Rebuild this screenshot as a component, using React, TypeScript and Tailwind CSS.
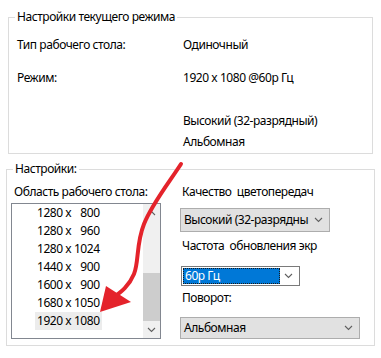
import React from "react";

const modes = [
  "1280 x \u2007800",
  "1280 x \u2007960",
  "1280 x 1024",
  "1440 x \u2007900",
  "1600 x \u2007900",
  "1680 x 1050",
  "1920 x 1080",
];

function Chevron({ up = false, className = "" }: { up?: boolean; className?: string }) {
  return (
    <svg width="9" height="6" viewBox="0 0 9 6" className={className}>
      <polyline
        points={up ? "1,5 4.5,1.5 8,5" : "1,1 4.5,4.5 8,1"}
        fill="none"
        stroke="currentColor"
        strokeWidth="1.1"
      />
    </svg>
  );
}

function Select({ text, width, height }: { text: string; width: string; height: string }) {
  return (
    <div className={`${width} ${height} flex items-center border border-[#adadad] bg-[#e1e1e1] pl-[3px] pr-[6px]`}>
      <span className="flex-1 whitespace-nowrap">{text}</span>
      <Chevron className="text-[#606060] shrink-0" />
    </div>
  );
}

export default function App() {
  return (
    <div className="relative w-[381px] h-[358px] bg-white font-['Noto_Sans',sans-serif] text-[12px] leading-[16px] tracking-[-0.45px] text-black overflow-hidden">
      {/* current mode */}
      <fieldset className="ml-[8px] mt-[9px] w-[365px] h-[145px] border border-[#dcdcdc] pl-[6px]">
        <legend className="px-[2px]">Настройки текущего режима</legend>
        <div className="grid grid-cols-[166px_1fr] pl-[2px]">
          <div className="mt-[12px]">Тип рабочего стола:</div>
          <div className="mt-[12px]">Одиночный</div>
          <div className="mt-[17px]">Режим:</div>
          <div className="mt-[17px]">1920 x 1080 @60р Гц</div>
          <div />
          <div className="mt-[27px]">Высокий (32-разрядный)</div>
          <div />
          <div className="mt-[5px]">Альбомная</div>
        </div>
      </fieldset>

      {/* settings */}
      <fieldset className="ml-[6px] mt-[7px] w-[369px] h-[185px] border border-[#dcdcdc] pl-[4px]">
        <legend className="ml-[2px] px-[2px]">Настройки:</legend>
        <div className="flex gap-[19px]">
          <div className="w-[150px]">
            <div className="mt-[7px] pl-[3px] whitespace-nowrap">Область рабочего стола:</div>
            <div className="mt-[3px] h-[136px] border border-[#828790] flex">
              <div className="flex-1">
                {modes.map((m, i) => (
                  <div key={i} className="h-[18px] flex items-center">
                    <span
                      className={`ml-[23px] px-[2px] h-[18px] flex items-center whitespace-pre ${
                        i === modes.length - 1 ? "bg-[#ececec]" : ""
                      }`}
                    >
                      {m}
                    </span>
                  </div>
                ))}
              </div>
              <div className="w-[17px] bg-[#f0f0f0] flex flex-col">
                <div className="h-[17px] flex items-center justify-center text-[#606060]">
                  <Chevron up />
                </div>
                <div className="flex-1 flex flex-col">
                  <div className="h-[52px]" />
                  <div className="flex-1 bg-[#cdcdcd]" />
                </div>
                <div className="h-[17px] flex items-center justify-center text-[#606060]">
                  <Chevron />
                </div>
              </div>
            </div>
          </div>

          <div className="flex-1">
            <div className="mt-[7px] pl-[2px]">Качество&nbsp; цветопередач</div>
            <div className="mt-[8px]">
              <Select text="Высокий (32-разрядны" width="w-[150px]" height="h-[24px]" />
            </div>
            <div className="mt-[6px] pl-[2px] whitespace-nowrap">Частота&nbsp; обновления экр</div>
            <div className="mt-[12px] ml-[1px] w-[119px] h-[20px] border border-[#7a7a7a] bg-white flex items-center p-[1px] pr-[6px]">
              <div className="w-[97px] h-[16px] bg-[#0078d7] text-white border border-dotted border-[#1a1a1a] flex items-center pl-[1px]">
                60р Гц
              </div>
              <div className="flex-1" />
              <Chevron className="text-[#606060]" />
            </div>
            <div className="mt-[4px] pl-[2px]">Поворот:</div>
            <div className="mt-[11px]">
              <Select text="Альбомная" width="w-[180px]" height="h-[22px]" />
            </div>
          </div>
        </div>
      </fieldset>

      {/* annotation arrow */}
      <svg className="absolute left-0 top-0 pointer-events-none" width="381" height="358">
        <path
          d="M181,164 C168,184 152,204 144,224 C136,244 139,262 134,274 C129,286 121,292 114,297"
          fill="none"
          stroke="#e4232b"
          strokeWidth="4"
          strokeLinecap="round"
        />
        <polygon points="100,312 106,286 131,302" fill="#e4232b" />
      </svg>
    </div>
  );
}
